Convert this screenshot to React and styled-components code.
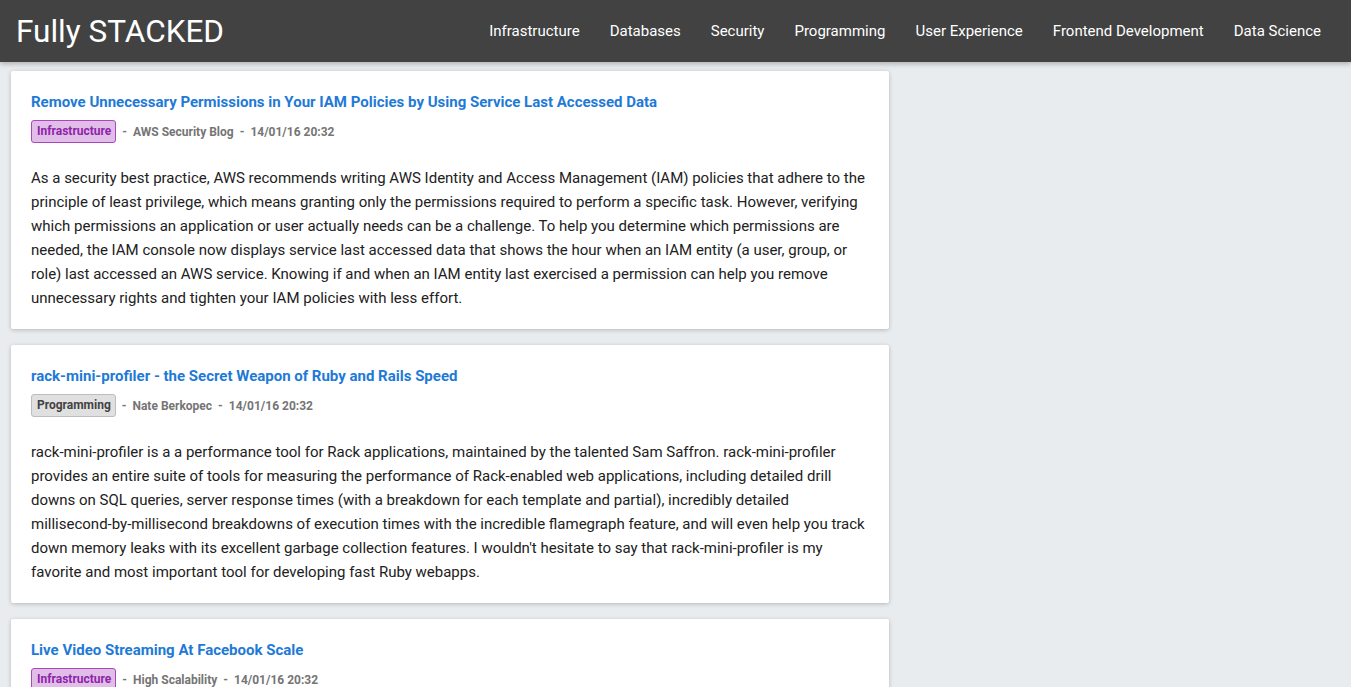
import styled, { createGlobalStyle } from 'styled-components';

const GlobalStyle = createGlobalStyle`
  html, body {
    margin: 0;
    padding: 0;
    background: #e9ecef;
    font-family: Roboto, "Noto Sans", sans-serif;
  }
`;

const Header = styled.header`
  height: 62px;
  background: #424242;
  display: flex;
  align-items: center;
  justify-content: space-between;
  padding: 0 15px 0 16px;
  box-shadow: 0 2px 5px rgba(0, 0, 0, 0.26);
  position: relative;
  z-index: 1;
`;

const Brand = styled.h1`
  margin: 0;
  font-size: 31.5px;
  font-weight: 400;
  color: #fff;
`;

const Nav = styled.nav`
  display: flex;
  align-items: center;
`;

const NavItem = styled.a`
  color: #fff;
  font-size: 15px;
  padding: 0 15px;
  text-decoration: none;
  cursor: pointer;
`;

const Feed = styled.main`
  width: 878px;
  padding: 9px 0 0 11px;
  display: flex;
  flex-direction: column;
  gap: 16px;
`;

const Card = styled.article`
  background: #fff;
  border-radius: 2px;
  padding: 20px 20px 19px;
  box-shadow: 0 1px 4px rgba(0, 0, 0, 0.22);
`;

const Title = styled.a`
  display: block;
  color: #1e7ad6;
  font-size: 15px;
  font-weight: 700;
  line-height: 22px;
  text-decoration: none;
`;

const Meta = styled.div`
  display: flex;
  align-items: center;
  gap: 6px;
  margin-top: 7px;
  font-size: 12px;
  font-weight: 700;
  color: #757575;
`;

const palette = {
  Infrastructure: { bg: '#e1bee7', border: '#ab47bc', fg: '#8e24aa' },
  Programming: { bg: '#e0e0e0', border: '#bdbdbd', fg: '#424242' },
};

const Badge = styled.span`
  display: inline-block;
  padding: 0 4px 0 5px;
  height: 21px;
  line-height: 21px;
  border-radius: 3px;
  background: ${(p) => palette[p.$cat].bg};
  border: 1px solid ${(p) => palette[p.$cat].border};
  color: ${(p) => palette[p.$cat].fg};
`;

const Body = styled.p`
  margin: 23px 0 0;
  font-size: 15px;
  line-height: 24px;
  color: #212121;
`;

const navItems = [
  'Infrastructure',
  'Databases',
  'Security',
  'Programming',
  'User Experience',
  'Frontend Development',
  'Data Science',
];

const posts = [
  {
    title: 'Remove Unnecessary Permissions in Your IAM Policies by Using Service Last Accessed Data',
    cat: 'Infrastructure',
    source: 'AWS Security Blog',
    date: '14/01/16 20:32',
    body: 'As a security best practice, AWS recommends writing AWS Identity and Access Management (IAM) policies that adhere to the principle of least privilege, which means granting only the permissions required to perform a specific task. However, verifying which permissions an application or user actually needs can be a challenge. To help you determine which permissions are needed, the IAM console now displays service last accessed data that shows the hour when an IAM entity (a user, group, or role) last accessed an AWS service. Knowing if and when an IAM entity last exercised a permission can help you remove unnecessary rights and tighten your IAM policies with less effort.',
  },
  {
    title: 'rack-mini-profiler - the Secret Weapon of Ruby and Rails Speed',
    cat: 'Programming',
    source: 'Nate Berkopec',
    date: '14/01/16 20:32',
    body: "rack-mini-profiler is a a performance tool for Rack applications, maintained by the talented Sam Saffron. rack-mini-profiler provides an entire suite of tools for measuring the performance of Rack-enabled web applications, including detailed drill downs on SQL queries, server response times (with a breakdown for each template and partial), incredibly detailed millisecond-by-millisecond breakdowns of execution times with the incredible flamegraph feature, and will even help you track down memory leaks with its excellent garbage collection features. I wouldn't hesitate to say that rack-mini-profiler is my favorite and most important tool for developing fast Ruby webapps.",
  },
  {
    title: 'Live Video Streaming At Facebook Scale',
    cat: 'Infrastructure',
    source: 'High Scalability',
    date: '14/01/16 20:32',
    body: 'Operating at Facebook scale is far from a solved problem. Live video streaming at that scale brings its own challenges, from handling massive spikes of concurrent viewers to keeping latency low for every broadcast around the world.',
  },
];

export default function App() {
  return (
    <>
      <GlobalStyle />
      <Header>
        <Brand>Fully STACKED</Brand>
        <Nav>
          {navItems.map((n) => (
            <NavItem key={n}>{n}</NavItem>
          ))}
        </Nav>
      </Header>
      <Feed>
        {posts.map((p) => (
          <Card key={p.title}>
            <Title>{p.title}</Title>
            <Meta>
              <Badge $cat={p.cat}>{p.cat}</Badge>
              <span>-</span>
              <span>{p.source}</span>
              <span>-</span>
              <span>{p.date}</span>
            </Meta>
            <Body>{p.body}</Body>
          </Card>
        ))}
      </Feed>
    </>
  );
}
